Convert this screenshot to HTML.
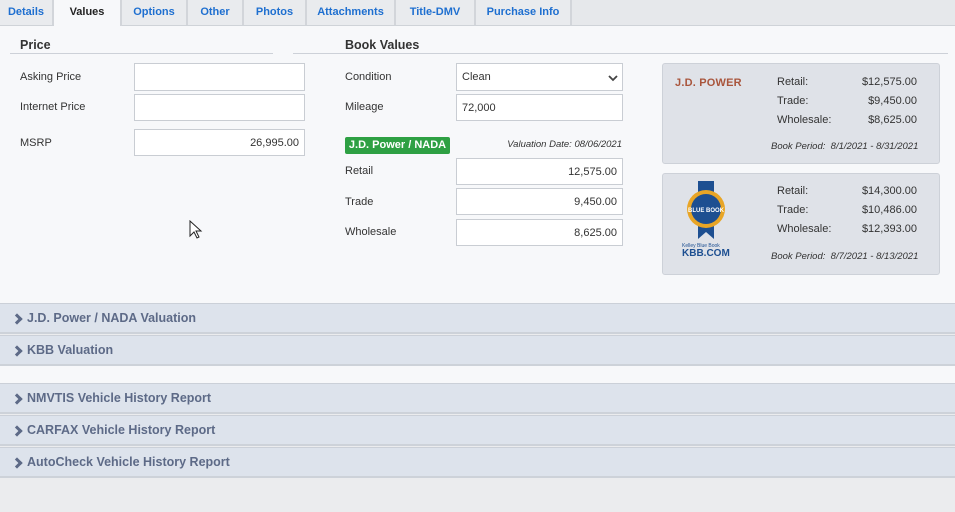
<!DOCTYPE html>
<html><head><style>
*{box-sizing:border-box;margin:0;padding:0}
body{width:955px;height:512px;background:#ebecee;font-family:"Liberation Sans",Arial,sans-serif;font-size:11px;color:#333;position:relative;overflow:hidden}
.a{position:absolute}
.tabs{left:0;top:0;width:955px;height:26px;background:#e6e8eb;border-bottom:1px solid #cfd3d8}
.tab{position:absolute;top:0;height:25px;background:#e9ebee;border-right:2px solid #d2d5da;color:#1e6fd0;font-weight:bold;font-size:11px;text-align:center;line-height:25px}
.tab.act{background:#f7f8fa;color:#222;height:26px}
.main{left:0;top:26px;width:955px;height:277px;background:#f7f8fa}
h3{position:absolute;font-size:12.5px;font-weight:bold;color:#333}
.ul{position:absolute;height:1px;background:#cdd1d8}
.lbl{position:absolute;font-size:11px;color:#333}
.in{position:absolute;background:#fff;border:1px solid #c9cdd3;font-size:11px;line-height:27px;padding:0 5px;color:#333}
.r{text-align:right}
.card{position:absolute;left:662px;width:278px;background:#dfe2e8;border:1px solid #cdd1d8;border-radius:3px}
.card .k{position:absolute;left:114px;font-size:11px;color:#333}
.card .v{position:absolute;right:22px;font-size:11px;color:#333}
.card .bp{position:absolute;left:108px;font-size:9.5px;font-style:italic;color:#333;white-space:nowrap}
.acc{position:absolute;left:0;width:955px;height:31px;background:#dde3ec;border-top:1px solid #cbd0d8;border-bottom:2px solid #cdd2d9;color:#5d6a87;font-weight:bold;font-size:12.5px;line-height:29px;padding-left:27px}
.acc:before{content:"";position:absolute;left:13px;top:11px;width:5px;height:5px;border-right:3px solid #5d6a87;border-top:3px solid #5d6a87;transform:rotate(45deg)}
</style></head><body>
<div class="a tabs"></div>
<div class="tab" style="left:0;width:54px">Details</div>
<div class="tab act" style="left:54px;width:68px">Values</div>
<div class="tab" style="left:122px;width:66px">Options</div>
<div class="tab" style="left:188px;width:56px">Other</div>
<div class="tab" style="left:244px;width:63px">Photos</div>
<div class="tab" style="left:307px;width:89px">Attachments</div>
<div class="tab" style="left:396px;width:80px">Title-DMV</div>
<div class="tab" style="left:476px;width:96px">Purchase Info</div>
<div class="a main"></div>

<h3 style="left:20px;top:38px">Price</h3>
<div class="ul" style="left:10px;top:53px;width:263px"></div>
<h3 style="left:345px;top:38px">Book Values</h3>
<div class="ul" style="left:293px;top:53px;width:655px"></div>

<div class="lbl" style="left:20px;top:71px">Asking Price</div>
<div class="in" style="left:134px;top:63px;width:171px;height:28px"></div>
<div class="lbl" style="left:20px;top:101px">Internet Price</div>
<div class="in" style="left:134px;top:94px;width:171px;height:27px"></div>
<div class="lbl" style="left:20px;top:137px">MSRP</div>
<div class="in r" style="left:134px;top:129px;width:171px;height:27px">26,995.00</div>

<div class="lbl" style="left:345px;top:71px">Condition</div>
<div class="in" style="left:456px;top:63px;width:167px;height:28px">Clean
<svg style="position:absolute;right:4px;top:10px" width="10" height="8" viewBox="0 0 10 8"><path d="M1 2l4 4 4-4" fill="none" stroke="#444" stroke-width="1.8"/></svg></div>
<div class="lbl" style="left:345px;top:101px">Mileage</div>
<div class="in" style="left:456px;top:94px;width:167px;height:27px">72,000</div>
<div class="a" style="left:345px;top:137px;width:105px;height:17px;background:#2ea043;border-radius:2px;color:#fff;font-weight:bold;font-size:11px;line-height:17px;text-align:center">J.D. Power / NADA</div>
<div class="a" style="left:460px;top:139px;width:162px;text-align:right;font-size:9.5px;font-style:italic;color:#333">Valuation Date: 08/06/2021</div>
<div class="lbl" style="left:345px;top:165px">Retail</div>
<div class="in r" style="left:456px;top:158px;width:167px;height:27px">12,575.00</div>
<div class="lbl" style="left:345px;top:196px">Trade</div>
<div class="in r" style="left:456px;top:188px;width:167px;height:27px">9,450.00</div>
<div class="lbl" style="left:345px;top:226px">Wholesale</div>
<div class="in r" style="left:456px;top:219px;width:167px;height:27px">8,625.00</div>

<div class="card" style="top:63px;height:101px">
<div class="a" style="left:12px;top:13px;color:#a9553c;font-weight:bold;font-size:11px;letter-spacing:0.2px">J.D. POWER</div>
<div class="k" style="top:12px">Retail:</div><div class="v" style="top:12px">$12,575.00</div>
<div class="k" style="top:31px">Trade:</div><div class="v" style="top:31px">$9,450.00</div>
<div class="k" style="top:50px">Wholesale:</div><div class="v" style="top:50px">$8,625.00</div>
<div class="bp" style="top:77px">Book Period:&nbsp;&nbsp;8/1/2021 - 8/31/2021</div>
</div>
<div class="card" style="top:173px;height:102px">
<svg class="a" style="left:20px;top:7px" width="46" height="60" viewBox="0 0 46 60">
<path d="M15 0h16v58l-8-7-8 7z" fill="#1d4f91"/>
<circle cx="23" cy="28" r="19" fill="#e8a526"/>
<circle cx="23" cy="28" r="15" fill="#1d4f91"/>
<text x="23" y="31" font-size="6" font-weight="bold" fill="#fff" text-anchor="middle" font-family="Liberation Sans">BLUE BOOK</text>
</svg>
<div class="a" style="left:19px;top:69px;font-size:5px;color:#1d4f91">Kelley Blue Book</div>
<div class="a" style="left:19px;top:74px;font-size:10px;font-weight:bold;color:#1d4f91">KBB.COM</div>
<div class="k" style="top:11px">Retail:</div><div class="v" style="top:11px">$14,300.00</div>
<div class="k" style="top:30px">Trade:</div><div class="v" style="top:30px">$10,486.00</div>
<div class="k" style="top:49px">Wholesale:</div><div class="v" style="top:49px">$12,393.00</div>
<div class="bp" style="top:77px">Book Period:&nbsp;&nbsp;8/7/2021 - 8/13/2021</div>
</div>

<svg class="a" style="left:189px;top:220px" width="14" height="20" viewBox="0 0 14 20"><path d="M1 1v15l4-4 3 6 2-1-3-6h5z" fill="#fff" stroke="#222" stroke-width="1"/></svg>

<div class="a" style="left:0;top:366px;width:955px;height:17px;background:#f7f8fa"></div>
<div class="acc" style="top:303px">J.D. Power / NADA Valuation</div>
<div class="acc" style="top:335px">KBB Valuation</div>
<div class="acc" style="top:383px">NMVTIS Vehicle History Report</div>
<div class="acc" style="top:415px">CARFAX Vehicle History Report</div>
<div class="acc" style="top:447px">AutoCheck Vehicle History Report</div>
</body></html>
